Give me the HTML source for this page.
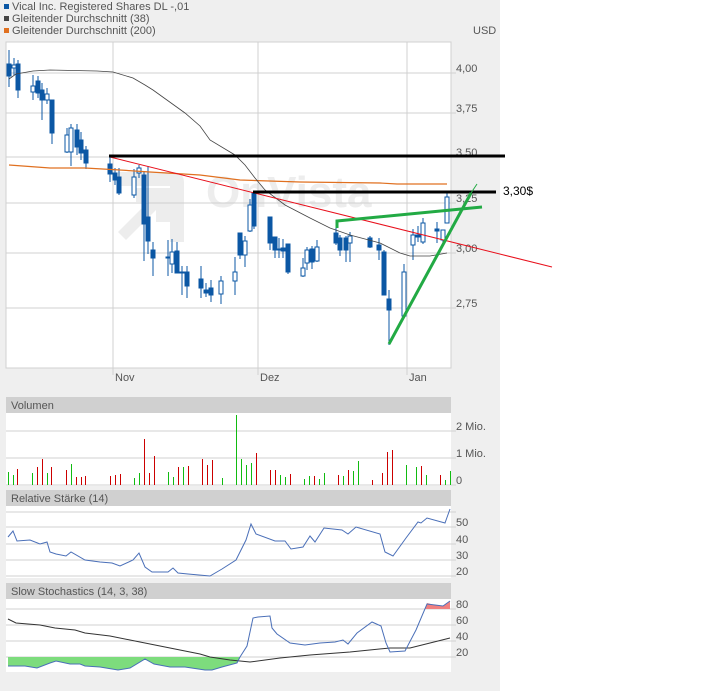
<!DOCTYPE html><html><head><meta charset="utf-8"><style>
body{margin:0;width:719px;height:691px;background:#fff;overflow:hidden;font-family:"Liberation Sans",sans-serif}
svg text{font-family:"Liberation Sans",sans-serif}
</style></head><body>
<svg id="s" width="719" height="691" xmlns="http://www.w3.org/2000/svg">
<rect x="0" y="0" width="500" height="691" fill="#efefef"/>
<rect x="4" y="4" width="5" height="5" fill="#0b57a4"/><text x="12" y="10" font-size="11" fill="#555">Vical Inc. Registered Shares DL -,01</text>
<rect x="4" y="16" width="5" height="5" fill="#444"/><text x="12" y="22" font-size="11" fill="#555">Gleitender Durchschnitt (38)</text>
<rect x="4" y="28" width="5" height="5" fill="#e07020"/><text x="12" y="34" font-size="11" fill="#555">Gleitender Durchschnitt (200)</text>
<text x="473" y="34" font-size="11" fill="#555">USD</text>
<rect x="6" y="42" width="445" height="326" fill="#fff" stroke="#d0d0d0"/>
<g fill="#ededed"><path d="M118 172h56a10 10 0 0 1 10 10v60h-14v-56h-52z"/><path d="M118 232l30-30h-12v-14h34v34h-14v-12l-30 30z"/><text x="206" y="207" font-size="44" font-weight="bold">OnVista</text></g>
<g stroke="#d0d0d0" stroke-width="1">
<line x1="6" y1="73" x2="456" y2="73"/><line x1="6" y1="113" x2="456" y2="113"/><line x1="6" y1="157" x2="456" y2="157"/><line x1="6" y1="203" x2="456" y2="203"/><line x1="6" y1="253" x2="456" y2="253"/><line x1="6" y1="308" x2="456" y2="308"/>
<line x1="113" y1="42" x2="113" y2="375"/><line x1="258" y1="42" x2="258" y2="375"/><line x1="407" y1="42" x2="407" y2="375"/>
</g>
<g font-size="11" fill="#555"><text x="456" y="72">4,00</text><text x="456" y="112">3,75</text><text x="456" y="156">3,50</text><text x="456" y="202">3,25</text><text x="456" y="252">3,00</text><text x="456" y="307">2,75</text>
<text x="115" y="381">Nov</text><text x="260" y="381">Dez</text><text x="409" y="381">Jan</text></g>
<g id="c"></g>
<polyline fill="none" stroke="#e07020" stroke-width="1.2" points="9,165 50,168 85,168 120,170 150,172 200,175 240,180 300,182 380,183 397,184 447,184"/>
<polyline fill="none" stroke="#444" stroke-width="0.8" points="9,79 16,74 33,71 50,70 97,71 113,72 133,78 145,85 153,90 185,113 200,126 210,140 235,155 245,165 255,178 265,190 285,205 310,218 330,228 350,235 380,243 400,253 410,256 430,256 447,253"/>
<line x1="110" y1="157" x2="552" y2="267" stroke="#e8101c" stroke-width="1"/>
<line x1="109" y1="156" x2="505" y2="156" stroke="#000" stroke-width="3"/>
<line x1="253" y1="192" x2="496" y2="192" stroke="#000" stroke-width="3"/>
<text x="503" y="195" font-size="12" fill="#000">3,30$</text>
<polyline fill="none" stroke="#22aa44" stroke-width="3" points="337,228 337,221 482,207"/>
<line x1="389" y1="344" x2="471" y2="193" stroke="#22aa44" stroke-width="3"/>
<line x1="471" y1="193" x2="477" y2="184" stroke="#22aa44" stroke-width="1"/>
<rect x="6" y="397" width="445" height="16" fill="#d0d0d0"/><text x="11" y="409" font-size="11" fill="#555">Volumen</text>
<rect x="6" y="413" width="445" height="73" fill="#fff"/>
<g stroke="#d0d0d0"><line x1="6" y1="431" x2="456" y2="431"/><line x1="6" y1="458" x2="456" y2="458"/><line x1="6" y1="485" x2="456" y2="485"/></g>
<g font-size="11" fill="#555"><text x="456" y="430">2 Mio.</text><text x="456" y="457">1 Mio.</text><text x="456" y="484">0</text></g>
<g id="v"></g>
<rect x="6" y="490" width="445" height="16" fill="#d0d0d0"/><text x="11" y="502" font-size="11" fill="#555">Relative Stärke (14)</text>
<rect x="6" y="506" width="445" height="72" fill="#fff"/>
<g stroke="#d0d0d0"><line x1="6" y1="512" x2="456" y2="512"/><line x1="6" y1="527" x2="456" y2="527"/><line x1="6" y1="544" x2="456" y2="544"/><line x1="6" y1="560" x2="456" y2="560"/><line x1="6" y1="576" x2="456" y2="576"/></g>
<g font-size="11" fill="#555"><text x="456" y="526">50</text><text x="456" y="543">40</text><text x="456" y="559">30</text><text x="456" y="575">20</text></g>
<polyline fill="none" stroke="#4a6fb8" stroke-width="1" points="8,537 13,531 17,541 30,540 40,544 47,542 50,552 56,554 66,556 71,552 85,560 100,562 112,563 120,566 133,560 139,553 145,567 152,572 168,572 173,568 178,573 188,574 210,576 222,569 236,560 246,540 251,524 256,534 275,541 285,541 291,549 303,547 310,536 315,542 324,528 342,530 348,534 356,527 380,534 385,552 393,556 406,538 418,522 421,523 427,518 445,523 450,509"/>
<rect x="6" y="583" width="445" height="16" fill="#d0d0d0"/><text x="11" y="595" font-size="11" fill="#555">Slow Stochastics (14, 3, 38)</text>
<rect x="6" y="599" width="445" height="73" fill="#fff"/>
<g stroke="#d0d0d0"><line x1="6" y1="609" x2="456" y2="609"/><line x1="6" y1="625" x2="456" y2="625"/><line x1="6" y1="641" x2="456" y2="641"/><line x1="6" y1="657" x2="456" y2="657"/></g>
<g font-size="11" fill="#555"><text x="456" y="608">80</text><text x="456" y="624">60</text><text x="456" y="640">40</text><text x="456" y="656">20</text></g>
<polygon fill="#7ddc7d" points="8,657 8,666 13,666 25,666 37,668 50,663 56,661 70,664 80,664 85,666 100,667 118,670 130,668 145,659 154,664 170,667 185,667 205,670 212,670 222,667 237,663 240,657"/>
<polygon fill="#f08080" points="425,609 427,603 435,605 443,606 450,601 450,609"/>
<polyline fill="none" stroke="#333" stroke-width="1" points="8,619 16,623 40,625 55,628 75,630 85,633 110,636 135,641 160,646 180,650 200,654 210,657 230,660 250,662 280,658 310,655 350,652 390,648 410,648 430,643 450,638"/>
<polyline fill="none" stroke="#4a6fb8" stroke-width="1" points="8,666 13,666 25,666 37,668 50,663 56,661 70,664 80,664 85,666 100,667 118,670 130,668 145,659 154,664 170,667 185,667 205,670 212,670 222,667 237,663 240,657 247,646 253,618 258,617 270,616 272,628 277,634 290,643 305,645 320,643 335,642 343,640 348,644 357,633 372,622 381,626 386,643 390,652 405,651 416,630 427,604 435,605 443,606 450,601"/>
</svg>
<script>
var NS="http://www.w3.org/2000/svg";
function el(p,t,a){var e=document.createElementNS(NS,t);for(var k in a)e.setAttribute(k,a[k]);p.appendChild(e);}
var C=[[9,64,76,50,87,1],[14,65,68,58,75,0],[18,64,90,60,98,1],[33,86,92,75,100,0],[38,81,93,76,98,1],[42,90,100,83,120,1],[47,94,100,88,104,0],[52,100,133,100,144,1],[67,135,152,128,153,0],[71,128,152,124,166,0],[77,130,147,124,155,1],[81,140,153,132,160,1],[86,150,163,146,169,1],
[110,164,174,157,182,1],[115,173,180,168,185,1],[119,177,193,168,195,1],[134,177,195,169,198,0],[139,168,173,165,178,0],[144,175,224,172,261,1],[148,217,241,166,254,1],[153,250,258,242,276,1],[168,257,258,240,276,1],[172,252,264,239,273,0],[177,251,273,242,273,1],[182,272,273,266,295,1],[187,272,286,266,298,1],[201,279,288,266,298,1],[206,290,293,283,297,1],[211,288,295,280,302,1],[221,281,294,276,304,0],[235,272,281,257,295,0],[240,233,255,233,259,1],[245,241,255,236,267,0],[250,205,231,199,232,0],[254,193,226,193,229,1],
[270,217,243,217,250,1],[275,237,250,237,258,1],[279,249,250,238,258,1],[283,248,251,239,258,1],[288,244,272,244,274,1],[303,268,276,258,277,0],[307,250,263,247,270,0],[312,249,262,246,269,1],[317,247,261,240,262,0],[336,233,243,226,245,1],[340,238,250,235,256,1],[346,238,250,236,262,1],[350,236,243,232,262,0],[370,238,247,236,248,1],[379,245,250,238,260,1],[384,252,295,250,295,1],[389,299,310,290,345,1],[404,272,316,264,316,0],[413,235,245,229,260,0],[418,235,237,226,242,1],[423,223,242,218,244,0],[437,229,231,222,243,1],[443,230,240,230,243,0],[447,197,223,192,223,0]];
var g=document.getElementById("c");
C.forEach(function(c){el(g,"line",{x1:c[0],x2:c[0],y1:c[3],y2:c[4],stroke:"#0b57a4","stroke-width":1});
el(g,"rect",{x:c[0]-2,y:c[1],width:4,height:Math.max(1,c[2]-c[1]),fill:c[5]?"#0b57a4":"#fff",stroke:"#0b57a4","stroke-width":1});});
var V="8g472 13g475 17r469 32g473 37r467 42r459 47g473 51r467 66r470 71g464 76r477 81r477 85r476 110r476 115r475 120r474 134g478 139g473 144r439 149r473 154r456 168g472 173g477 178r467 183g467 188r466 202r459 207r465 212r460 222g478 236g415 241g459 246g465 251g463 256r453 270r470 275r470 280g475 285g477 290r474 304g479 309g476 314r476 319g479 324g473 338r475 343g476 348r470 353g471 358g461 372r480 382r473 387r452 392r450 406g465 416g467 421r466 426g475 440r475 445g480 450g471".split(" ");
var vg=document.getElementById("v");
V.forEach(function(s){var m=s.match(/(\d+)([gr])(\d+)/);el(vg,"line",{x1:+m[1]+.5,x2:+m[1]+.5,y1:m[3],y2:485,stroke:m[2]=="g"?"#11bb11":"#cc0000","stroke-width":1});});
</script>
</body></html>
